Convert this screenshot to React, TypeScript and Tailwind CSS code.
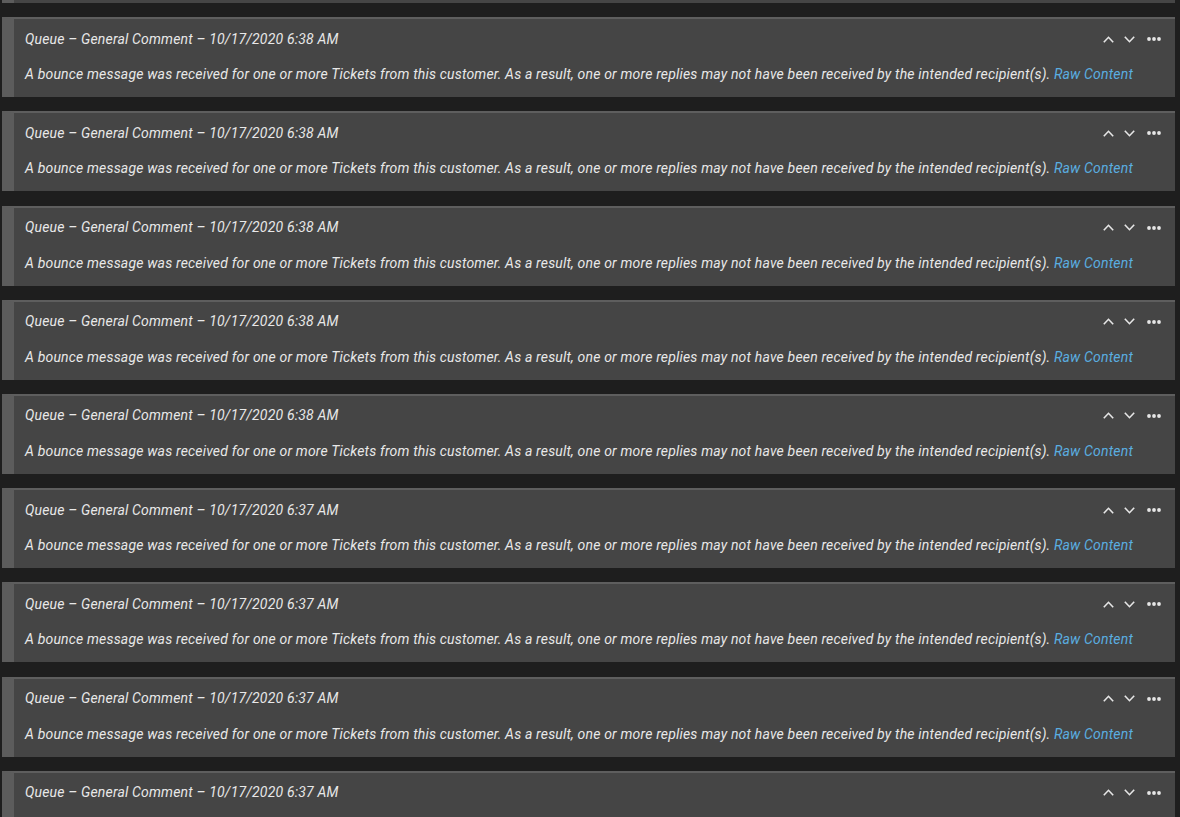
import React from 'react';

const times = ['6:38', '6:38', '6:38', '6:38', '6:38', '6:37', '6:37', '6:37', '6:37'];

const ChevronUp = () => (
  <svg width="11" height="7" viewBox="0 0 11 7" fill="none" stroke="#e6e6e6" strokeWidth="1.6">
    <path d="M0.8 6.2l4.7-4.9 4.7 4.9" />
  </svg>
);

const ChevronDown = () => (
  <svg width="11" height="7" viewBox="0 0 11 7" fill="none" stroke="#e6e6e6" strokeWidth="1.6">
    <path d="M0.8 0.8l4.7 4.9 4.7-4.9" />
  </svg>
);

const Dots = () => (
  <svg width="14" height="4" viewBox="0 0 14 4" fill="#e6e6e6">
    <circle cx="2" cy="2" r="1.9" />
    <circle cx="7" cy="2" r="1.9" />
    <circle cx="12" cy="2" r="1.9" />
  </svg>
);

const Article: React.FC<{ time: string; last?: boolean }> = ({ time, last }) => (
  <div className="h-[80px] shrink-0 bg-[#454545] border-l-[12px] border-l-[#5c5c5c] border-t-2 border-t-[#5e5e5e] pl-[11px] pr-[14px] pt-[10px]">
    <div className="flex items-center justify-between h-5">
      <span>Queue – General Comment – 10/17/2020 {time} AM</span>
      <div className="flex items-center not-italic">
        <ChevronUp />
        <span className="ml-[10px]"><ChevronDown /></span>
        <span className="ml-[12px]"><Dots /></span>
      </div>
    </div>
    {!last && (
      <p className="mt-[15px] leading-5">
        A bounce message was received for one or more Tickets from this customer. As a result, one or more replies may not have been received by the intended recipient(s).{' '}
        <a className="text-[#5aaee0]">Raw Content</a>
      </p>
    )}
  </div>
);

export default function App() {
  return (
    <div className="h-[817px] overflow-hidden bg-[#1e1e1e] pl-[2px] pr-[5px] text-[14px] tracking-[0.18px] italic text-[#e8e8e8] font-['Roboto',sans-serif]">
      <div className="flex flex-col gap-[14.2px]">
        <div className="h-[3px] shrink-0 bg-[#454545] border-l-[12px] border-l-[#5c5c5c]" />
        {times.map((t, i) => (
          <Article key={i} time={t} last={i === times.length - 1} />
        ))}
      </div>
    </div>
  );
}
